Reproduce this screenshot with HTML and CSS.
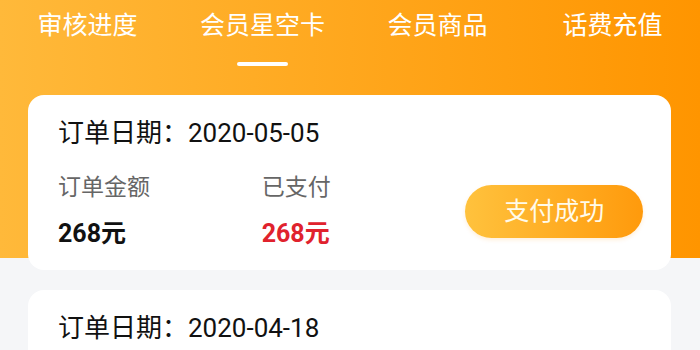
FILE: index.html
```html
<!DOCTYPE html>
<html lang="zh-CN">
<head>
    <meta charset="UTF-8">
    <meta name="viewport" content="width=device-width, initial-scale=1.0">
    <title>订单列表</title>
    <link rel="stylesheet" href="styles.css">
</head>
<body>
    <div class="page">
        <!-- Top tabs -->
        <div class="tabs">
            <div class="tab">审核进度</div>
            <div class="tab active">会员星空卡</div>
            <div class="tab">会员商品</div>
            <div class="tab">话费充值</div>
        </div>

        <!-- Order list -->
        <div class="orders">
            <div class="card">
                <div class="order-date">订单日期：2020-05-05</div>
                <div class="order-body">
                    <div class="col">
                        <div class="label">订单金额</div>
                        <div class="value">268元</div>
                    </div>
                    <div class="col">
                        <div class="label">已支付</div>
                        <div class="value paid">268元</div>
                    </div>
                    <div class="status-btn">支付成功</div>
                </div>
            </div>

            <div class="card">
                <div class="order-date">订单日期：2020-04-18</div>
                <div class="order-body">
                    <div class="col">
                        <div class="label">订单金额</div>
                        <div class="value">268元</div>
                    </div>
                    <div class="col">
                        <div class="label">已支付</div>
                        <div class="value paid">268元</div>
                    </div>
                    <div class="status-btn">支付成功</div>
                </div>
            </div>
        </div>
    </div>
</body>
</html>
```

FILE: styles.css
```css
/* Page */
body {
    margin: 0;
    font-family: Roboto, "Noto Sans CJK SC", sans-serif;
    color: #111;
    background: #f5f6f8;
    overflow: hidden;
}

.page {
    width: 700px;
    height: 350px;
    overflow: hidden;
    background:
        linear-gradient(to right, #ffb93a, #ff9500) top left / 100% 258px no-repeat,
        #f5f6f8;
}

/* Tabs */
.tabs {
    display: grid;
    grid-template-columns: repeat(4, 1fr);
    padding-top: 8px;
}

.tab {
    color: #fff;
    font-size: 25px;
    line-height: 36px;
    text-align: center;
    padding-bottom: 22px;
}

.tab.active {
    padding-bottom: 0;
}

.tab.active::after {
    content: "";
    display: block;
    width: 51px;
    height: 4px;
    margin: 18px auto 0;
    background: #fff;
    border-radius: 2px;
}

/* Cards */
.orders {
    display: flex;
    flex-direction: column;
    gap: 20px;
    padding: 29px 29px 0 28px;
}

.card {
    background: #fff;
    border-radius: 16px;
    padding: 22px 28px 21px 30px;
}

.order-date {
    font-size: 26px;
    line-height: 32px;
    color: #111;
}

.order-body {
    display: flex;
    align-items: center;
    margin-top: 24px;
}

.col {
    width: 204px;
    display: flex;
    flex-direction: column;
    gap: 16px;
}

.label {
    font-size: 23px;
    line-height: 30px;
    color: #666;
}

.value {
    font-size: 25px;
    line-height: 30px;
    font-weight: bold;
    color: #111;
}

.value.paid {
    color: #e0222d;
}

/* Status button */
.status-btn {
    margin-left: auto;
    width: 178px;
    height: 53px;
    line-height: 53px;
    border-radius: 27px;
    text-align: center;
    color: #fffbea;
    font-size: 25px;
    background: linear-gradient(to right, #ffc23d, #ff9a0c);
    box-shadow: 0 2px 4px rgba(255, 150, 0, 0.15);
}
```
